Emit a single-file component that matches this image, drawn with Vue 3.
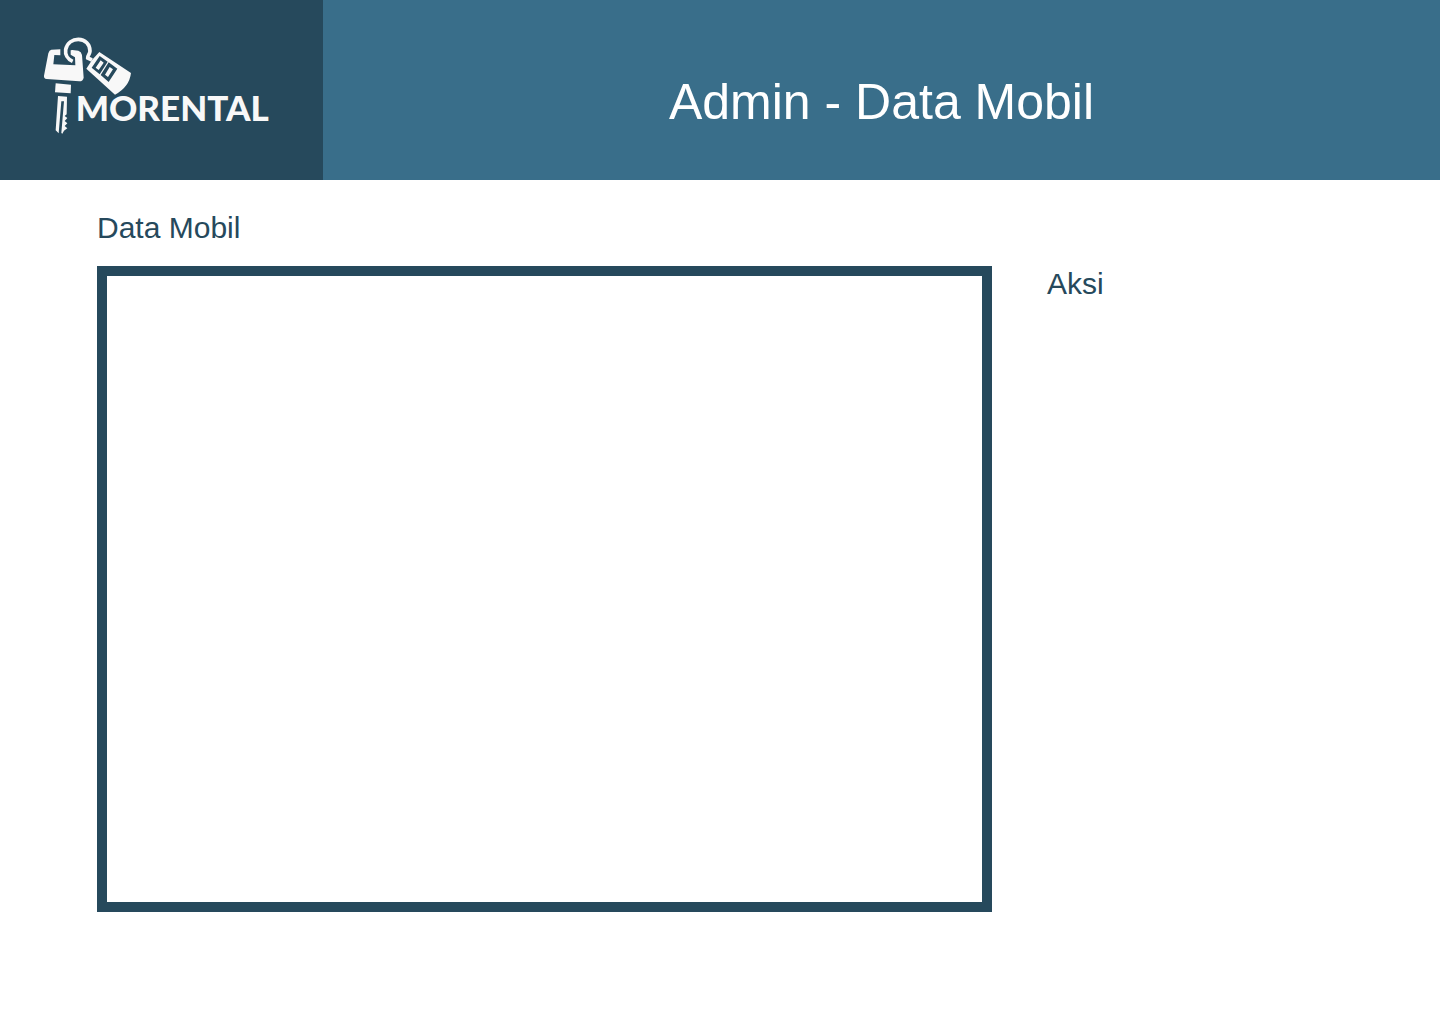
<script setup>
const title = 'Admin - Data Mobil'
</script>

<template>
  <div class="page">
    <header class="header">
      <div class="brand">
        <svg class="logo" viewBox="0 0 750 360" role="img" aria-label="Morental">
          <path
            d="M64 74L91 73V91L73 90L70 118L136 121L135 97L122 89V76Q127 74 133 76L145 77Q154 80 156 90L161 158Q159 169 148 169L50 162Q41 160 42 152L55 85Q58 75 64 74Z"
          />
          <path
            class="ring-gap"
            d="M128 110C112 102 105 88 107 74"
          />
          <path
            class="ring"
            d="M128 109C112 102 105 88 107 74C111 53 128 43 145 43C166 43 180 59 180 78C180 88 172 92 173 99L186 105"
          />
          <path
            fill-rule="evenodd"
            d="M208 81L303 144Q298 186 255 209L169 131L186 105ZM209 93L185 128L209 148L233 110ZM236 112L212 150L236 171L262 131ZM212 106L221 113L206 135L197 128ZM239 126L249 133L234 156L225 149Z"
          />
          <path d="M77 175L123 179L122 205L75 202Z" />
          <path
            fill-rule="evenodd"
            d="M84 213L111 215L110 268L104 273L112 279L104 288L112 295L104 303L112 310L102 317L97 326L94 324L102 229H94L86 325L77 316Z"
          />
          <text class="wordmark" x="137" y="287">MORENTAL</text>
        </svg>
      </div>
      <h1 class="title">{{ title }}</h1>
    </header>

    <main class="content">
      <h2 class="label">Data Mobil</h2>
      <div class="columns">
        <section class="panel" aria-label="Data Mobil"></section>
        <aside>
          <h2 class="label">Aksi</h2>
        </aside>
      </div>
    </main>
  </div>
</template>

<style>
body {
  margin: 0;
  background: #fff;
}
</style>

<style scoped>
.page {
  font-family: "Liberation Sans", Arial, sans-serif;
  color: #26495c;
}

.header {
  display: flex;
  min-height: 180px;
  background: #396e8a;
}

.brand {
  box-sizing: border-box;
  flex: none;
  width: 323px;
  padding: 25px 30px;
  background: #26495c;
}

.logo {
  display: block;
  width: 250px;
  height: 120px;
  fill: #f8f8f8;
  overflow: visible;
}

.ring,
.ring-gap {
  fill: none;
  stroke: #f8f8f8;
  stroke-width: 11;
}

.ring-gap {
  stroke: #26495c;
  stroke-width: 22;
}

.wordmark {
  font-family: Lato, sans-serif;
  font-size: 105px;
  font-weight: 900;
}

.title {
  flex: 1;
  align-self: center;
  margin: 0;
  padding-top: 24px;
  font-size: 50px;
  font-weight: 400;
  line-height: 58px;
  text-align: center;
  color: #fff;
}

.content {
  display: flex;
  flex-direction: column;
  gap: 20px;
  padding: 30px 97px;
}

.columns {
  display: grid;
  grid-template-columns: 895fr 296fr;
  gap: 55px;
}

.label {
  margin: 0;
  font-size: 30px;
  font-weight: 400;
  line-height: 36px;
}

.panel {
  box-sizing: border-box;
  min-height: 646px;
  border: 10px solid #26495c;
}
</style>
